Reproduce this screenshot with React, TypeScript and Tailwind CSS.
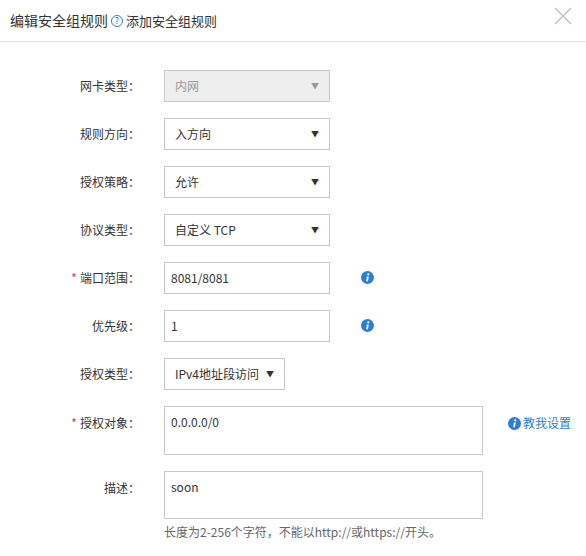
const font = { fontFamily: '"Noto Sans CJK SC", "Noto Sans", sans-serif' }

function Info() {
  return (
    <svg width="13" height="13" viewBox="0 0 14 14">
      <circle cx="7" cy="7" r="7" fill="#2a7fd4" />
      <circle cx="7.8" cy="3.6" r="1.2" fill="#fff" />
      <path d="M6.3 6 L8.4 6 L7.4 11 L5.6 11 Z" fill="#fff" />
    </svg>
  )
}

function Row({ label, req, children, top = false }: { label: string; req?: boolean; children: React.ReactNode; top?: boolean }) {
  return (
    <div className={`flex ${top ? "items-start" : "items-center"}`}>
      <div className={`w-[140px] shrink-0 text-right text-[12px] text-[#333] ${top ? "pt-[8px]" : ""}`}>
        {req && <span className="text-[#e4393c] mr-[3px]">*</span>}
        {label}：
      </div>
      <div className="ml-[24px] flex items-start">{children}</div>
    </div>
  )
}

function Select({ value, w = "w-[166px]", disabled = false }: { value: string; w?: string; disabled?: boolean }) {
  return (
    <div className={`${w} h-[32px] border border-[#c8c8c8] flex items-center justify-between px-[10px] text-[12px] ${disabled ? "bg-[#eeeeee] text-[#999]" : "bg-white text-[#333]"}`}>
      <span>{value}</span>
      <span className={`text-[8px] ${disabled ? "text-[#999]" : "text-[#333]"}`}>▼</span>
    </div>
  )
}

function Input({ value }: { value: string }) {
  return (
    <div className="w-[166px] h-[32px] border border-[#c8c8c8] bg-white flex items-center px-[6px] text-[12px] text-[#333]">{value}</div>
  )
}

export default function App() {
  return (
    <div className="w-[586px] h-[556px] bg-white overflow-hidden" style={font}>
      <div className="h-[42px] border-b border-[#e1e1e1] flex items-center px-[10px] justify-between">
        <div className="flex items-center text-[14px] text-[#333]">
          <span>编辑安全组规则</span>
          <span className="mx-[3px] w-[12px] h-[12px] rounded-full border border-[#2a7fd4] text-[#2a7fd4] text-[9px] leading-[10px] flex items-center justify-center">?</span>
          <span className="text-[13px]">添加安全组规则</span>
        </div>
        <svg width="18" height="18" viewBox="0 0 18 18" className="mr-[4px] -mt-[10px]">
          <path d="M1 1 L17 17 M17 1 L1 17" stroke="#c4c4c4" strokeWidth="1.6" />
        </svg>
      </div>
      <div className="pt-[28px] flex flex-col gap-[16px]">
        <Row label="网卡类型"><Select value="内网" disabled /></Row>
        <Row label="规则方向"><Select value="入方向" /></Row>
        <Row label="授权策略"><Select value="允许" /></Row>
        <Row label="协议类型"><Select value="自定义 TCP" /></Row>
        <Row label="端口范围" req>
          <Input value="8081/8081" />
          <span className="ml-[31px] mt-[9px]"><Info /></span>
        </Row>
        <Row label="优先级">
          <Input value="1" />
          <span className="ml-[31px] mt-[9px]"><Info /></span>
        </Row>
        <Row label="授权类型"><Select value="IPv4地址段访问" w="w-[121px]" /></Row>
        <Row label="授权对象" req top>
          <div className="w-[319px] h-[49px] border border-[#c8c8c8] px-[6px] pt-[6px] text-[12px] text-[#333]">0.0.0.0/0</div>
          <span className="ml-[25px] mt-[8px] flex items-center gap-[2px] text-[12px] text-[#2a7fd4]"><Info />教我设置</span>
        </Row>
        <div>
          <Row label="描述" top>
            <div className="w-[319px] h-[48px] border border-[#c8c8c8] px-[6px] pt-[6px] text-[12px] text-[#333]">soon</div>
          </Row>
          <div className="ml-[164px] mt-[4px] text-[12px] text-[#666]">长度为2-256个字符，不能以http://或https://开头。</div>
        </div>
      </div>
    </div>
  )
}
